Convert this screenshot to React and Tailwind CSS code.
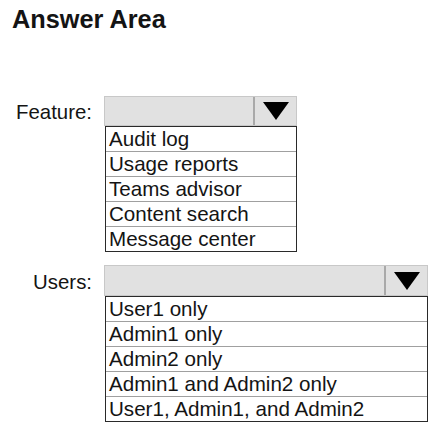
const Triangle = () => (
  <svg width="26" height="18" viewBox="0 0 26 18">
    <polygon points="0,0 26,0 13,18" fill="#000" />
  </svg>
);

const Dropdown = ({ label, width, headerH, labelPad, options }) => (
  <div className="flex items-start">
    <div
      className="w-[92px] text-right text-[20.4px] leading-[24px]"
      style={{ paddingTop: labelPad }}
    >
      {label}
    </div>
    <div className="ml-[12px] flex flex-col" style={{ width }}>
      <div
        className="flex border border-[#c8c8c8] bg-[#e1e1e1]"
        style={{ height: headerH }}
      >
        <div className="flex-1"></div>
        <div className="w-[43px] border-l-2 border-[#a9a9a9] flex items-center justify-center">
          <Triangle />
        </div>
      </div>
      <div className="ml-[1px] border border-[#2a2a2a] bg-white">
        {options.map((o, i) => (
          <div
            key={o}
            className={
              'h-[24px] pl-[3px] text-[20.6px] leading-[24px] whitespace-nowrap ' +
              (i < options.length - 1 ? 'h-[25px] border-b border-[#a0a0a0]' : '')
            }
          >
            {o}
          </div>
        ))}
      </div>
    </div>
  </div>
);

export default function App() {
  return (
    <div className="w-[439px] h-[433px] bg-white text-[#141414] font-['Liberation_Sans',Arial,sans-serif]">
      <h1 className="pl-[12px] pt-[7px] text-[25.3px] font-bold leading-none">Answer Area</h1>
      <div className="mt-[64px] flex flex-col gap-[13px]">
        <Dropdown
          label="Feature:"
          width="193px"
          headerH="30px"
          labelPad="4px"
          options={['Audit log', 'Usage reports', 'Teams advisor', 'Content search', 'Message center']}
        />
        <Dropdown
          label="Users:"
          width="324px"
          headerH="31px"
          labelPad="5px"
          options={[
            'User1 only',
            'Admin1 only',
            'Admin2 only',
            'Admin1 and Admin2 only',
            'User1, Admin1, and Admin2',
          ]}
        />
      </div>
    </div>
  );
}
